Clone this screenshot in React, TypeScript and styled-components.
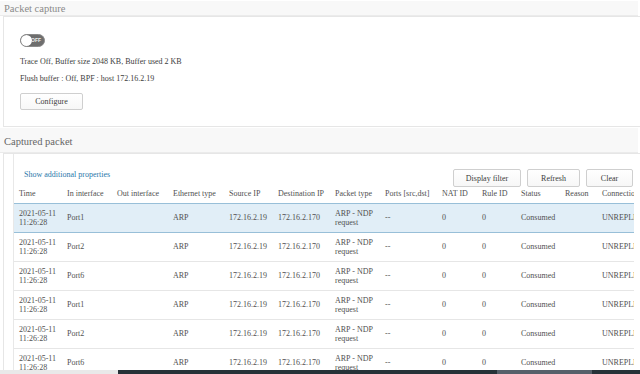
import React from "react";
import styled, { createGlobalStyle } from "styled-components";

const GlobalStyle = createGlobalStyle`
  html, body { margin: 0; padding: 0; background: #ffffff; }
  body { font-family: "Liberation Serif", "Times New Roman", serif; color: #555; }
  * { box-sizing: border-box; }
`;

const Page = styled.div`
  position: relative;
  width: 640px;
  height: 374px;
  overflow: hidden;
  background: #ffffff;
`;

const SectionHeader = styled.div<{ $h: number; $pt: number }>`
  height: ${(p) => p.$h}px;
  padding: ${(p) => p.$pt}px 0 0 4px;
  background: #f8f8f8;
  border-top: 1px solid #ffffff;
  border-bottom: 1px solid #ebebeb;
  margin-right: 2px;
`;

const SectionTitle = styled.div<{ $color: string }>`
  font-size: 10.5px;
  line-height: 12px;
  color: ${(p) => p.$color};
`;

const Panel = styled.div`
  margin-left: 3px;
  background: #ffffff;
  border: 1px solid #e6e6e6;
  border-right: none;
`;

const CapturePanel = styled(Panel)`
  height: 111px;
  padding: 17px 0 0 16px;
  display: flex;
  flex-direction: column;
  align-items: flex-start;
`;

const Toggle = styled.div`
  position: relative;
  width: 25px;
  height: 13px;
  border-radius: 7px;
  background: #6e6e6e;
  border: 1px solid #8a8a8a;
  display: flex;
  align-items: center;
  justify-content: flex-end;
  padding-right: 3px;
`;

const Knob = styled.span`
  position: absolute;
  left: 0px;
  top: 0px;
  width: 11px;
  height: 11px;
  border-radius: 50%;
  background: #ffffff;
  box-shadow: 0 0 1px rgba(0, 0, 0, 0.4);
`;

const ToggleLabel = styled.span`
  font-family: "Liberation Sans", Arial, sans-serif;
  font-size: 5px;
  font-weight: bold;
  color: #f0f0f0;
  line-height: 11px;
`;

const InfoLine = styled.div<{ $mt: number }>`
  margin-top: ${(p) => p.$mt}px;
  font-size: 8px;
  line-height: 10px;
  color: #3c3c3c;
`;

const Button = styled.button<{ $w: number }>`
  width: ${(p) => p.$w}px;
  height: 18px;
  padding: 0;
  font-family: "Liberation Serif", "Times New Roman", serif;
  font-size: 8px;
  color: #3c3c3c;
  background: linear-gradient(#ffffff, #f7f7f7);
  border: 1px solid #cfcfcf;
  border-radius: 2px;
`;

const ConfigureButton = styled(Button)`
  margin-top: 9px;
  height: 17px;
`;

const PacketPanel = styled(Panel)`
  height: 230px;
  padding: 0 4px 0 9px;
`;

const TableArea = styled.div`
  border-left: 1px solid #e8e8e8;
  height: 100%;
  width: 621px;
  overflow: hidden;
`;

const Toolbar = styled.div`
  display: flex;
  align-items: flex-start;
  height: 32px;
  padding: 14px 1px 0 10px;
`;

const Link = styled.a`
  font-size: 8px;
  line-height: 10px;
  color: #2a78aa;
  text-decoration: none;
  margin-top: 2px;
`;

const ButtonGroup = styled.div`
  margin-left: auto;
  display: flex;
  gap: 6px;
  margin-top: 1px;
`;

const Table = styled.table`
  table-layout: fixed;
  border-collapse: collapse;
  width: 653px;
  font-size: 8px;
  color: #505050;
`;

const HeadCell = styled.th<{ $w: number }>`
  width: ${(p) => p.$w}px;
  height: 17px;
  padding: 0 0 1px 5px;
  text-align: left;
  font-weight: normal;
  white-space: nowrap;
  overflow: hidden;
  color: #505050;
`;

const Row = styled.tr<{ $selected?: boolean }>`
  height: 29px;
  background: ${(p) => (p.$selected ? "#e1eef7" : "#ffffff")};
  border-top: 1px solid ${(p) => (p.$selected ? "#98bfd8" : "#e6e6e6")};
  border-bottom: 1px solid ${(p) => (p.$selected ? "#98bfd8" : "#e6e6e6")};
`;

const Cell = styled.td`
  padding: 0 0 0 5px;
  line-height: 9px;
  vertical-align: middle;
  white-space: nowrap;
  overflow: hidden;
`;

const Wrap = styled.span`
  display: block;
  white-space: normal;
`;

const BottomBar = styled.div`
  position: absolute;
  left: 0;
  right: 0;
  bottom: 0;
  height: 4px;
  display: flex;
`;

const BarSeg = styled.div<{ $w?: number; $c: string }>`
  background: ${(p) => p.$c};
  ${(p) => (p.$w ? `width: ${p.$w}px;` : "flex: 1;")}
`;

const columns: { label: string; w: number }[] = [
  { label: "Time", w: 48 },
  { label: "In interface", w: 50 },
  { label: "Out interface", w: 56 },
  { label: "Ethernet type", w: 56 },
  { label: "Source IP", w: 49 },
  { label: "Destination IP", w: 57 },
  { label: "Packet type", w: 50 },
  { label: "Ports [src,dst]", w: 57 },
  { label: "NAT ID", w: 40 },
  { label: "Rule ID", w: 39 },
  { label: "Status", w: 44 },
  { label: "Reason", w: 37 },
  { label: "Connection", w: 70 },
];

const ports = ["Port1", "Port2", "Port6", "Port1", "Port2", "Port6"];

export default function App() {
  return (
    <Page>
      <GlobalStyle />
      <SectionHeader $h={16} $pt={2}>
        <SectionTitle $color="#8a8a8a">Packet capture</SectionTitle>
      </SectionHeader>
      <CapturePanel>
        <Toggle>
          <Knob />
          <ToggleLabel>OFF</ToggleLabel>
        </Toggle>
        <InfoLine $mt={10}>Trace Off, Buffer size 2048 KB, Buffer used 2 KB</InfoLine>
        <InfoLine $mt={7}>Flush buffer : Off, BPF : host 172.16.2.19</InfoLine>
        <ConfigureButton $w={63}>Configure</ConfigureButton>
      </CapturePanel>
      <SectionHeader $h={26} $pt={8}>
        <SectionTitle $color="#666">Captured packet</SectionTitle>
      </SectionHeader>
      <PacketPanel>
        <TableArea>
          <Toolbar>
            <Link href="#">Show additional properties</Link>
            <ButtonGroup>
              <Button $w={68}>Display filter</Button>
              <Button $w={53}>Refresh</Button>
              <Button $w={47}>Clear</Button>
            </ButtonGroup>
          </Toolbar>
          <Table>
            <thead>
              <tr>
                {columns.map((c) => (
                  <HeadCell key={c.label} $w={c.w}>
                    {c.label}
                  </HeadCell>
                ))}
              </tr>
            </thead>
            <tbody>
              {ports.map((p, i) => (
                <Row key={i} $selected={i === 0}>
                  <Cell>
                    <Wrap>2021-05-11</Wrap>
                    <Wrap>11:26:28</Wrap>
                  </Cell>
                  <Cell>{p}</Cell>
                  <Cell></Cell>
                  <Cell>ARP</Cell>
                  <Cell>172.16.2.19</Cell>
                  <Cell>172.16.2.170</Cell>
                  <Cell>
                    <Wrap>ARP - NDP</Wrap>
                    <Wrap>request</Wrap>
                  </Cell>
                  <Cell>--</Cell>
                  <Cell>0</Cell>
                  <Cell>0</Cell>
                  <Cell>Consumed</Cell>
                  <Cell></Cell>
                  <Cell>UNREPLIED</Cell>
                </Row>
              ))}
            </tbody>
          </Table>
        </TableArea>
      </PacketPanel>
      <BottomBar>
        <BarSeg $w={118} $c="#e9e9e9" />
        <BarSeg $w={379} $c="#263238" />
        <BarSeg $w={95} $c="#56606a" />
        <BarSeg $c="#263238" />
      </BottomBar>
    </Page>
  );
}
